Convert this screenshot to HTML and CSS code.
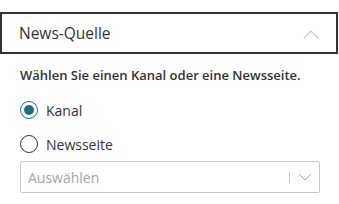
FILE: index.html
```html
<!DOCTYPE html>
<html lang="de">
<head>
<meta charset="utf-8">
<link rel="stylesheet" href="styles.css">
</head>
<body>
<div class="panel">
  <div class="header">
    <span class="header-title">News-Quelle</span>
    <svg class="chev-up" width="16" height="9" viewBox="0 0 16 9"><path d="M1 8 L8 1 L15 8" fill="none" stroke="#c8c8c8" stroke-width="1.2"/></svg>
  </div>
  <div class="body">
    <div class="label">Wählen Sie einen Kanal oder eine Newsseite.</div>
    <div class="radios">
      <div class="radio-row">
        <span class="radio checked"></span>
        <span class="radio-text">Kanal</span>
      </div>
      <div class="radio-row">
        <span class="radio"></span>
        <span class="radio-text">Newsseite</span>
      </div>
    </div>
    <div class="dropdown">
      <span class="placeholder">Auswählen</span>
      <span class="divider"></span>
      <svg class="chev-down" width="14" height="8" viewBox="0 0 14 8"><path d="M1 1 L7 7 L13 1" fill="none" stroke="#a6a6a6" stroke-width="1"/></svg>
    </div>
  </div>
</div>
</body>
</html>
```
FILE: styles.css
```css
html, body {
  margin: 0;
  padding: 0;
  background: #ffffff;
}
body {
  font-family: "Open Sans", "Noto Sans", sans-serif;
  color: #333333;
}
.panel {
  padding-top: 12px;
  width: 338px;
}
.header {
  box-sizing: border-box;
  height: 42px;
  border: 2px solid #333333;
  display: flex;
  align-items: center;
  justify-content: space-between;
  padding: 0 17px 0 17px;
}
.header-title {
  font-size: 15.5px;
  color: #333333;
}
.chev-up {
  display: block;
  margin-top: 2px;
}
.body {
  padding: 0 20px 0 20px;
}
.label {
  margin-top: 12px;
  font-size: 13px;
  font-weight: 600;
  line-height: 18px;
}
.radios {
  margin-top: 9px;
}
.radio-row {
  display: flex;
  align-items: center;
  height: 34px;
  gap: 8px;
}
.radio {
  box-sizing: border-box;
  width: 18px;
  height: 18px;
  border: 1px solid #333333;
  border-radius: 50%;
  display: flex;
  align-items: center;
  justify-content: center;
}
.radio.checked {
  border-color: #1b6f7b;
}
.radio.checked::after {
  content: "";
  width: 10px;
  height: 10px;
  border-radius: 50%;
  background: #1b6f7b;
}
.radio-text {
  font-size: 14px;
}
.dropdown {
  box-sizing: border-box;
  width: 300px;
  height: 32px;
  border: 1px solid #c8c8c8;
  border-radius: 2px;
  display: flex;
  align-items: center;
  padding: 0 7px 0 7px;
}
.placeholder {
  font-size: 14px;
  color: #a6a6a6;
  flex: 1;
}
.divider {
  width: 1px;
  height: 12px;
  background: #c8c8c8;
  margin-right: 8px;
}
.chev-down {
  display: block;
}
```
